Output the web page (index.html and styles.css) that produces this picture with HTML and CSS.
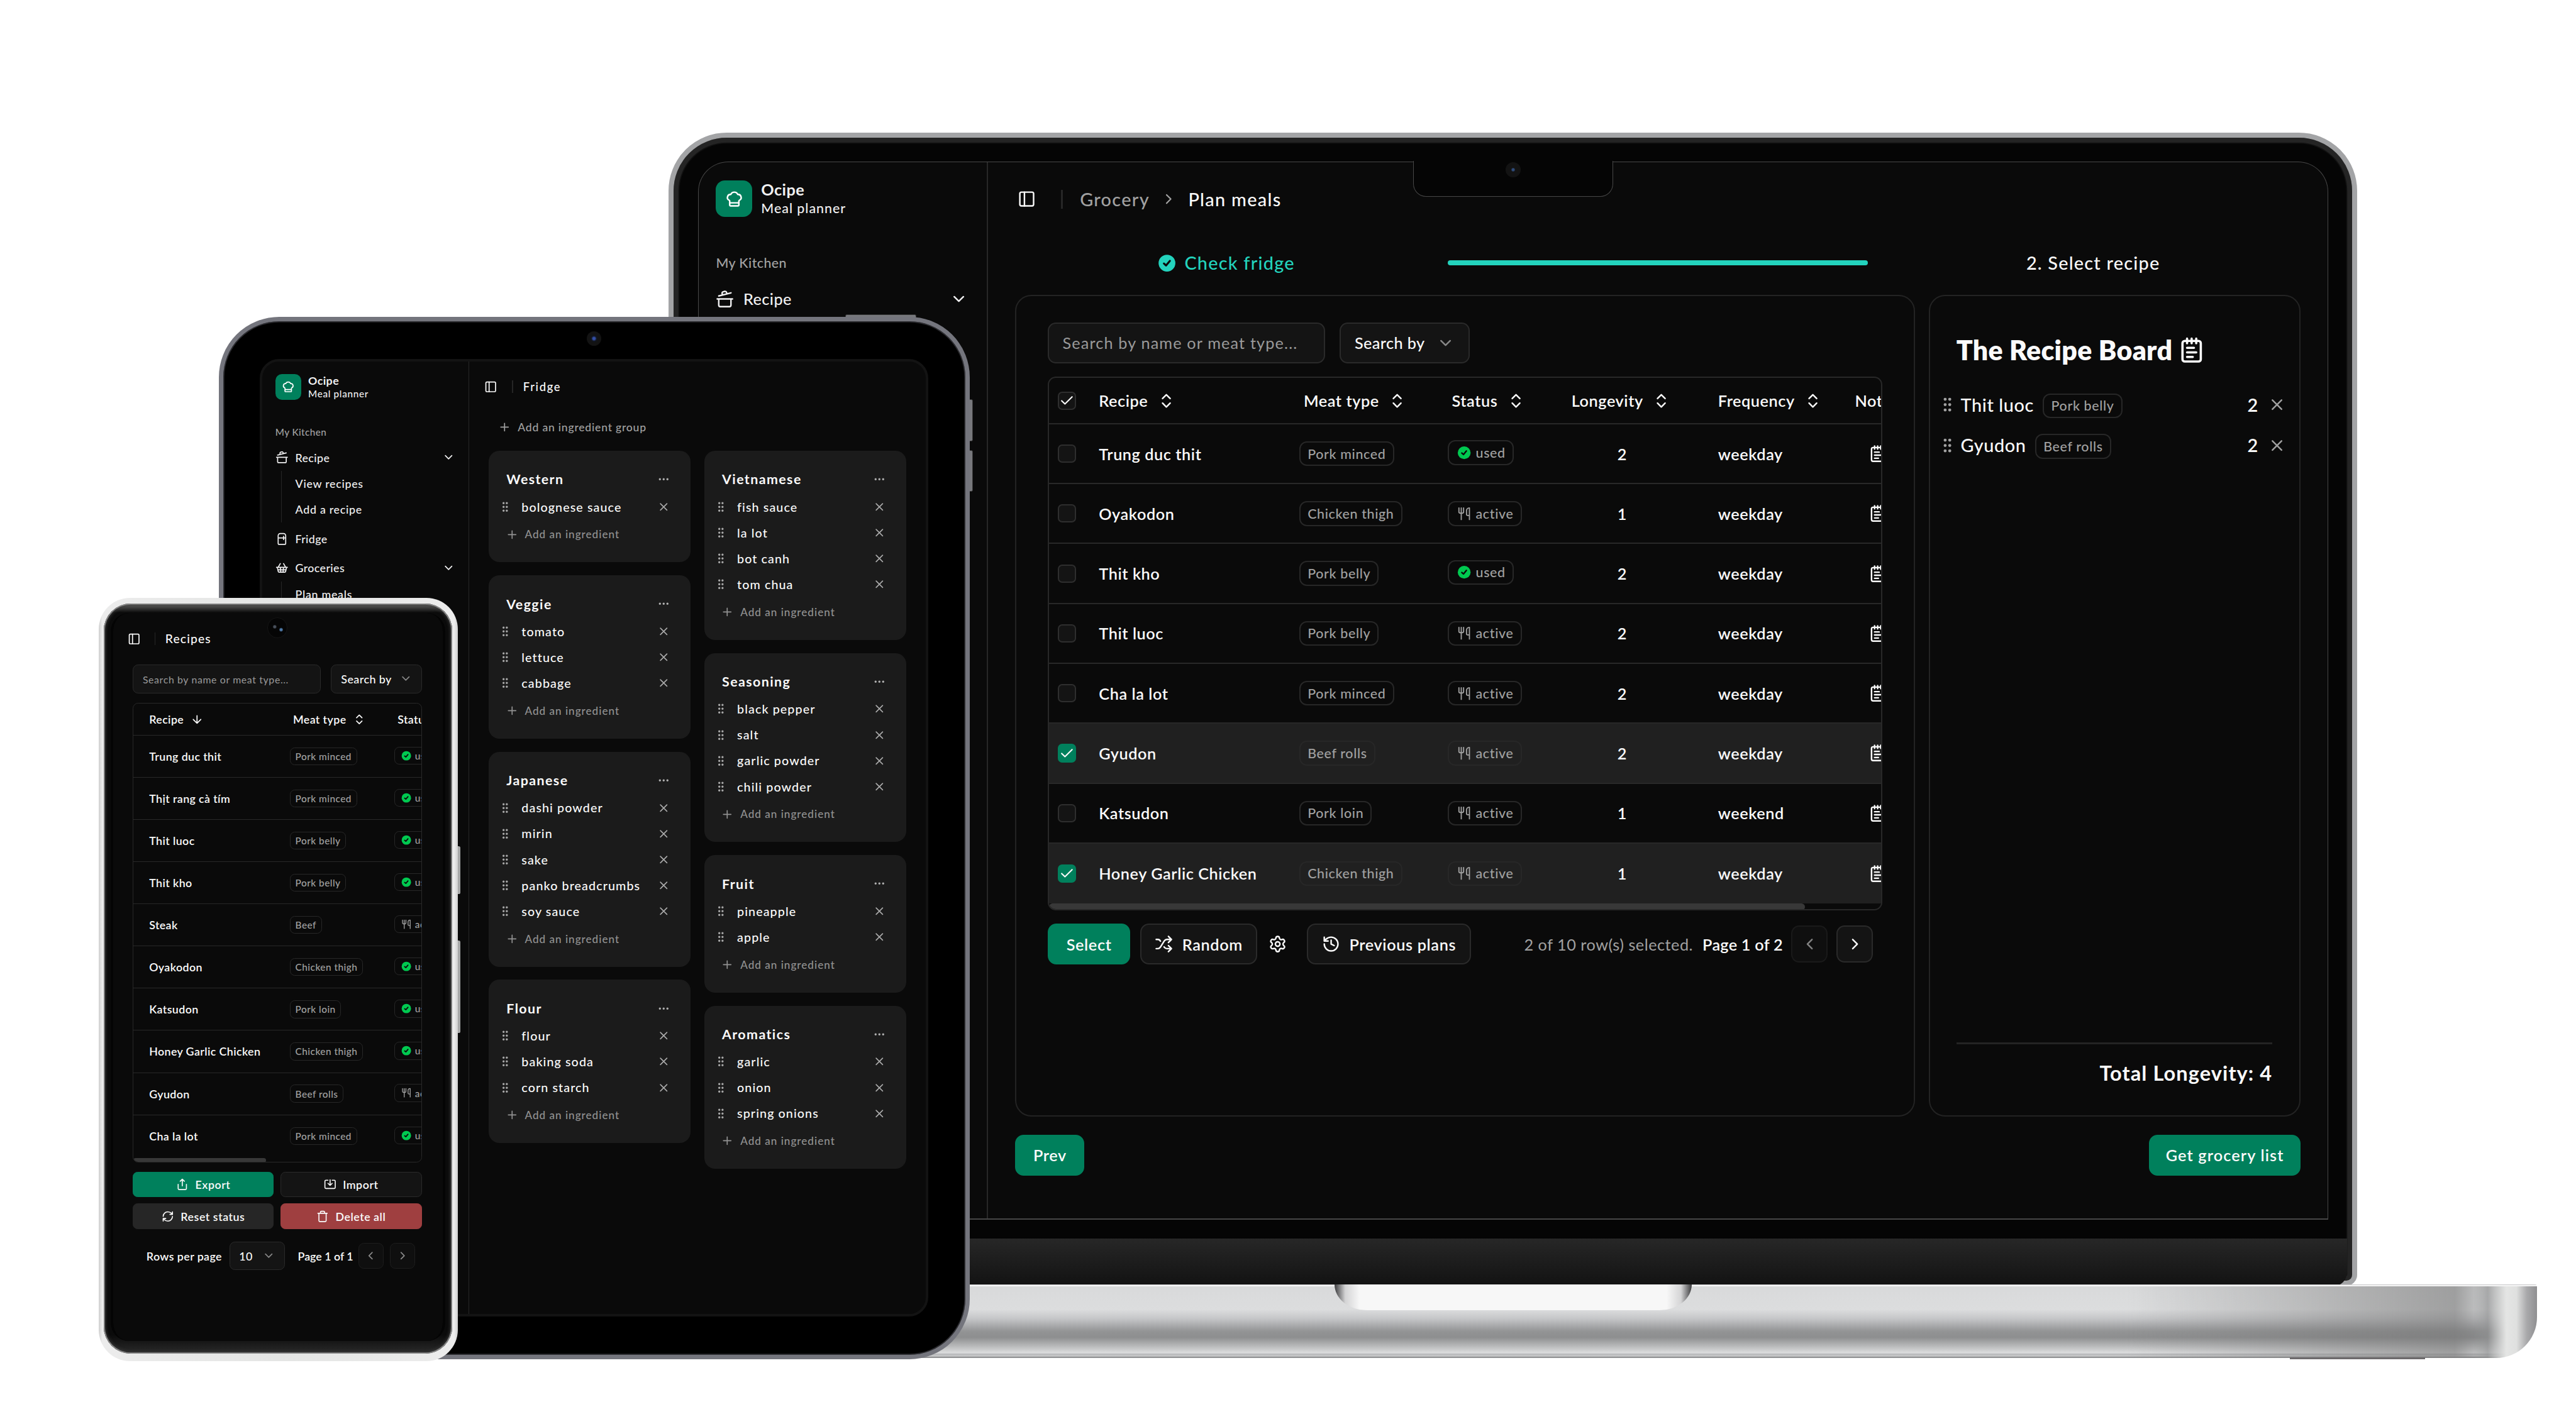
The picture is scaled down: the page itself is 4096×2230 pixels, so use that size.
FILE: index.html
```
<!DOCTYPE html>
<html lang="en">
<head>
<meta charset="utf-8">
<title>Ocipe – Meal planner</title>
<link rel="stylesheet" href="styles.css">
</head>
<body>
<svg class="sprite" aria-hidden="true">
<symbol id="hat" viewBox="0 0 24 24"><path d="M17 21a1 1 0 0 0 1-1v-5.35c0-.457.316-.844.727-1.041a4 4 0 0 0-2.134-7.589 5 5 0 0 0-9.186 0 4 4 0 0 0-2.134 7.588c.411.198.727.585.727 1.041V20a1 1 0 0 0 1 1ZM6 17h12"/></symbol>
<symbol id="pot" viewBox="0 0 24 24"><path d="M2 12h20M20 12v8a2 2 0 0 1-2 2H6a2 2 0 0 1-2-2v-8M4 8l16-4M8.86 6.78l-.45-1.81a2 2 0 0 1 1.45-2.43l1.94-.48a2 2 0 0 1 2.43 1.46l.45 1.8"/></symbol>
<symbol id="fridge" viewBox="0 0 24 24"><path d="M5 6a4 4 0 0 1 4-4h6a4 4 0 0 1 4 4v14a2 2 0 0 1-2 2H7a2 2 0 0 1-2-2ZM5 10h14M15 7v6"/></symbol>
<symbol id="basket" viewBox="0 0 24 24"><path d="m15 11-1 9M19 11l-4-7M2 11h20M3.500 11l1.600 7.400a2 2 0 0 0 2 1.600h9.800a2 2 0 0 0 2-1.600l1.700-7.400M4.500 15.500h15M5 11l4-7M9 11l1 9"/></symbol>
<symbol id="down" viewBox="0 0 24 24"><path d="m6 9 6 6 6-6"/></symbol>
<symbol id="right" viewBox="0 0 24 24"><path d="m9 18 6-6-6-6"/></symbol>
<symbol id="left" viewBox="0 0 24 24"><path d="m15 18-6-6 6-6"/></symbol>
<symbol id="sort" viewBox="0 0 24 24"><path d="m7 15 5 5 5-5M7 9l5-5 5 5"/></symbol>
<symbol id="arrow" viewBox="0 0 24 24"><path d="M12 5v14M19 12l-7 7-7-7"/></symbol>
<symbol id="panel" viewBox="0 0 24 24"><rect x="3" y="3" width="18" height="18" rx="2"/><path d="M9 3v18"/></symbol>
<symbol id="check" viewBox="0 0 24 24"><path d="M20 6 9 17l-5-5"/></symbol>
<symbol id="x" viewBox="0 0 24 24"><path d="M18 6 6 18M6 6l12 12"/></symbol>
<symbol id="plus" viewBox="0 0 24 24"><path d="M5 12h14M12 5v14"/></symbol>
<symbol id="dots" viewBox="0 0 24 24"><circle cx="5" cy="12" r="1"/><circle cx="12" cy="12" r="1"/><circle cx="19" cy="12" r="1"/></symbol>
<symbol id="grip" viewBox="0 0 24 24"><circle cx="9" cy="5" r="1"/><circle cx="9" cy="12" r="1"/><circle cx="9" cy="19" r="1"/><circle cx="15" cy="5" r="1"/><circle cx="15" cy="12" r="1"/><circle cx="15" cy="19" r="1"/></symbol>
<symbol id="note" viewBox="0 0 24 24"><path d="M8 2v4M12 2v4M16 2v4M8 10h6M8 14h8M8 18h5"/><rect x="4" y="4" width="16" height="18" rx="2"/></symbol>
<symbol id="fork" viewBox="0 0 24 24"><path d="M3 2v7c0 1.100.900 2 2 2h4a2 2 0 0 0 2-2V2M7 2v20M21 15V2a5 5 0 0 0-5 5v6c0 1.100.900 2 2 2h3Zm0 0v7"/></symbol>
<symbol id="done" viewBox="0 0 24 24"><circle class="disc" cx="12" cy="12" r="11"/><path class="tick" d="m8 12.500 2.800 2.500 5-6"/></symbol>
<symbol id="shuffle" viewBox="0 0 24 24"><path d="m18 14 4 4-4 4M18 2l4 4-4 4M2 18h1.973a4 4 0 0 0 3.300-1.700l5.454-8.600a4 4 0 0 1 3.300-1.700H22M2 6h1.972a4 4 0 0 1 3.600 2.200M22 18h-6.041a4 4 0 0 1-3.300-1.800l-.359-.450"/></symbol>
<symbol id="gear" viewBox="0 0 24 24"><path d="M9.671 4.136a2.340 2.340 0 0 1 4.659 0 2.340 2.340 0 0 0 3.319 1.915 2.340 2.340 0 0 1 2.330 4.033 2.340 2.340 0 0 0 0 3.831 2.340 2.340 0 0 1-2.330 4.033 2.340 2.340 0 0 0-3.319 1.915 2.340 2.340 0 0 1-4.659 0 2.340 2.340 0 0 0-3.320-1.915 2.340 2.340 0 0 1-2.330-4.033 2.340 2.340 0 0 0 0-3.831A2.340 2.340 0 0 1 6.350 6.051a2.340 2.340 0 0 0 3.319-1.915"/><circle cx="12" cy="12" r="3"/></symbol>
<symbol id="history" viewBox="0 0 24 24"><path d="M3 12a9 9 0 1 0 9-9 9.750 9.750 0 0 0-6.740 2.740L3 8M3 3v5h5M12 7v5l4 2"/></symbol>
<symbol id="share" viewBox="0 0 24 24"><path d="M12 2v13M16 6l-4-4-4 4M4 12v8a2 2 0 0 0 2 2h12a2 2 0 0 0 2-2v-8"/></symbol>
<symbol id="import" viewBox="0 0 24 24"><path d="M8 4H4a2 2 0 0 0-2 2v12a2 2 0 0 0 2 2h16a2 2 0 0 0 2-2V6a2 2 0 0 0-2-2h-4M12 3v11M8 10l4 4 4-4"/></symbol>
<symbol id="refresh" viewBox="0 0 24 24"><path d="M3 12a9 9 0 0 1 9-9 9.750 9.750 0 0 1 6.740 2.740L21 8M21 3v5h-5M21 12a9 9 0 0 1-9 9 9.750 9.750 0 0 1-6.740-2.740L3 16M8 16H3v5"/></symbol>
<symbol id="trash" viewBox="0 0 24 24"><path d="M3 6h18M19 6v14a2 2 0 0 1-2 2H7a2 2 0 0 1-2-2V6M8 6V4a2 2 0 0 1 2-2h4a2 2 0 0 1 2 2v2"/></symbol>
</svg>
<div class="stage">

<section class="laptop">
<div class="lid">
<div class="lid-chin"></div>
<div class="laptop-screen">
<aside class="side">
<div class="brand"><div class="logo"><svg><use href="#hat"/></svg></div><div class="brand-text"><b>Ocipe</b><span>Meal planner</span></div></div>
<div class="side-label">My Kitchen</div>
<div class="side-item"><svg><use href="#pot"/></svg><span>Recipe</span><svg class="end"><use href="#down"/></svg></div>
</aside>
<main class="main">
<header class="top"><svg><use href="#panel"/></svg><i class="sep"></i><span class="muted crumb1">Grocery</span><svg class="muted crumb-arrow"><use href="#right"/></svg><span>Plan meals</span></header>
<div class="steps"><div class="step teal"><svg class="done"><use href="#done"/></svg>Check fridge</div><i class="progress"></i><div class="step step2">2. Select recipe</div></div>
<div class="cards">
<section class="panel plan">
<div class="filters"><div class="input">Search by name or meat type...</div><div class="select">Search by<svg class="dim"><use href="#down"/></svg></div></div>
<div class="table">
<div class="tr th"><div class="cb"><svg><use href="#check"/></svg></div><div class="h">Recipe<svg><use href="#sort"/></svg></div><div class="h in">Meat type<svg><use href="#sort"/></svg></div><div class="h in">Status<svg><use href="#sort"/></svg></div><div class="h in">Longevity<svg><use href="#sort"/></svg></div><div class="h">Frequency<svg><use href="#sort"/></svg></div><div class="h">Notes</div></div>
<div class="tr"><div class="cb"></div><div>Trung duc thit</div><div><span class="tag">Pork minced</span></div><div><span class="tag st used"><svg class="done"><use href="#done"/></svg>used</span></div><div class="num">2</div><div>weekday</div><div class="nt"><svg><use href="#note"/></svg></div></div>
<div class="tr"><div class="cb"></div><div>Oyakodon</div><div><span class="tag">Chicken thigh</span></div><div><span class="tag st"><svg><use href="#fork"/></svg>active</span></div><div class="num">1</div><div>weekday</div><div class="nt"><svg><use href="#note"/></svg></div></div>
<div class="tr"><div class="cb"></div><div>Thit kho</div><div><span class="tag">Pork belly</span></div><div><span class="tag st used"><svg class="done"><use href="#done"/></svg>used</span></div><div class="num">2</div><div>weekday</div><div class="nt"><svg><use href="#note"/></svg></div></div>
<div class="tr"><div class="cb"></div><div>Thit luoc</div><div><span class="tag">Pork belly</span></div><div><span class="tag st"><svg><use href="#fork"/></svg>active</span></div><div class="num">2</div><div>weekday</div><div class="nt"><svg><use href="#note"/></svg></div></div>
<div class="tr"><div class="cb"></div><div>Cha la lot</div><div><span class="tag">Pork minced</span></div><div><span class="tag st"><svg><use href="#fork"/></svg>active</span></div><div class="num">2</div><div>weekday</div><div class="nt"><svg><use href="#note"/></svg></div></div>
<div class="tr on"><div class="cb"><svg><use href="#check"/></svg></div><div>Gyudon</div><div><span class="tag">Beef rolls</span></div><div><span class="tag st"><svg><use href="#fork"/></svg>active</span></div><div class="num">2</div><div>weekday</div><div class="nt"><svg><use href="#note"/></svg></div></div>
<div class="tr"><div class="cb"></div><div>Katsudon</div><div><span class="tag">Pork loin</span></div><div><span class="tag st"><svg><use href="#fork"/></svg>active</span></div><div class="num">1</div><div>weekend</div><div class="nt"><svg><use href="#note"/></svg></div></div>
<div class="tr on last"><div class="cb"><svg><use href="#check"/></svg></div><div>Honey Garlic Chicken</div><div><span class="tag">Chicken thigh</span></div><div><span class="tag st"><svg><use href="#fork"/></svg>active</span></div><div class="num">1</div><div>weekday</div><div class="nt"><svg><use href="#note"/></svg></div></div>
<div class="bar"></div>
</div>
<div class="tools"><div class="btn green b-select">Select</div><div class="btn b-random"><svg><use href="#shuffle"/></svg>Random</div><svg class="gear"><use href="#gear"/></svg><div class="btn b-prev"><svg><use href="#history"/></svg>Previous plans</div><div class="pager"><span class="muted count">2 of 10 row(s) selected.</span><span class="page">Page 1 of 2</span><div class="nav off"><svg><use href="#left"/></svg></div><div class="nav"><svg><use href="#right"/></svg></div></div></div>
</section>
<section class="panel board">
<h2>The Recipe Board<svg><use href="#note"/></svg></h2>
<div class="pick"><svg class="grip muted"><use href="#grip"/></svg><span>Thit luoc</span><span class="tag">Pork belly</span><span class="qty">2</span><svg class="muted"><use href="#x"/></svg></div>
<div class="pick"><svg class="grip muted"><use href="#grip"/></svg><span>Gyudon</span><span class="tag">Beef rolls</span><span class="qty">2</span><svg class="muted"><use href="#x"/></svg></div>
<div class="total">Total Longevity: 4</div>
</section>
</div>
<footer class="foot"><div class="btn green">Prev</div><div class="btn green b-list">Get grocery list</div></footer>
</main>
</div>
<div class="notch"><i></i></div>
</div>
<div class="base"><div class="thumb"></div></div>
<div class="foot-pad"></div>
</section>

<section class="tablet">
<i class="tkey tkey-top"></i><i class="tkey tkey-a"></i><i class="tkey tkey-b"></i>
<div class="tablet-body"><i class="tcam"></i>
<div class="tablet-screen">
<aside class="side">
<div class="brand"><div class="logo"><svg><use href="#hat"/></svg></div><div class="brand-text"><b>Ocipe</b><span>Meal planner</span></div></div>
<div class="side-label">My Kitchen</div>
<div class="side-item"><svg><use href="#pot"/></svg><span>Recipe</span><svg class="end"><use href="#down"/></svg></div>
<div class="sub"><div>View recipes</div><div>Add a recipe</div></div>
<div class="side-item"><svg><use href="#fridge"/></svg><span>Fridge</span></div>
<div class="side-item"><svg><use href="#basket"/></svg><span>Groceries</span><svg class="end"><use href="#down"/></svg></div>
<div class="sub"><div>Plan meals</div></div>
</aside>
<main class="main">
<header class="top"><svg><use href="#panel"/></svg><i class="sep"></i><span>Fridge</span></header>
<div class="add add-group"><svg><use href="#plus"/></svg>Add an ingredient group</div>
<div class="groups">
<div class="col">
<div class="group"><h3>Western<svg><use href="#dots"/></svg></h3>
<div class="ing"><svg class="grip"><use href="#grip"/></svg><span>bolognese sauce</span><svg><use href="#x"/></svg></div>
<div class="add"><svg><use href="#plus"/></svg>Add an ingredient</div></div>
<div class="group"><h3>Veggie<svg><use href="#dots"/></svg></h3>
<div class="ing"><svg class="grip"><use href="#grip"/></svg><span>tomato</span><svg><use href="#x"/></svg></div>
<div class="ing"><svg class="grip"><use href="#grip"/></svg><span>lettuce</span><svg><use href="#x"/></svg></div>
<div class="ing"><svg class="grip"><use href="#grip"/></svg><span>cabbage</span><svg><use href="#x"/></svg></div>
<div class="add"><svg><use href="#plus"/></svg>Add an ingredient</div></div>
<div class="group"><h3>Japanese<svg><use href="#dots"/></svg></h3>
<div class="ing"><svg class="grip"><use href="#grip"/></svg><span>dashi powder</span><svg><use href="#x"/></svg></div>
<div class="ing"><svg class="grip"><use href="#grip"/></svg><span>mirin</span><svg><use href="#x"/></svg></div>
<div class="ing"><svg class="grip"><use href="#grip"/></svg><span>sake</span><svg><use href="#x"/></svg></div>
<div class="ing"><svg class="grip"><use href="#grip"/></svg><span>panko breadcrumbs</span><svg><use href="#x"/></svg></div>
<div class="ing"><svg class="grip"><use href="#grip"/></svg><span>soy sauce</span><svg><use href="#x"/></svg></div>
<div class="add"><svg><use href="#plus"/></svg>Add an ingredient</div></div>
<div class="group"><h3>Flour<svg><use href="#dots"/></svg></h3>
<div class="ing"><svg class="grip"><use href="#grip"/></svg><span>flour</span><svg><use href="#x"/></svg></div>
<div class="ing"><svg class="grip"><use href="#grip"/></svg><span>baking soda</span><svg><use href="#x"/></svg></div>
<div class="ing"><svg class="grip"><use href="#grip"/></svg><span>corn starch</span><svg><use href="#x"/></svg></div>
<div class="add"><svg><use href="#plus"/></svg>Add an ingredient</div></div>
</div>
<div class="col">
<div class="group"><h3>Vietnamese<svg><use href="#dots"/></svg></h3>
<div class="ing"><svg class="grip"><use href="#grip"/></svg><span>fish sauce</span><svg><use href="#x"/></svg></div>
<div class="ing"><svg class="grip"><use href="#grip"/></svg><span>la lot</span><svg><use href="#x"/></svg></div>
<div class="ing"><svg class="grip"><use href="#grip"/></svg><span>bot canh</span><svg><use href="#x"/></svg></div>
<div class="ing"><svg class="grip"><use href="#grip"/></svg><span>tom chua</span><svg><use href="#x"/></svg></div>
<div class="add"><svg><use href="#plus"/></svg>Add an ingredient</div></div>
<div class="group"><h3>Seasoning<svg><use href="#dots"/></svg></h3>
<div class="ing"><svg class="grip"><use href="#grip"/></svg><span>black pepper</span><svg><use href="#x"/></svg></div>
<div class="ing"><svg class="grip"><use href="#grip"/></svg><span>salt</span><svg><use href="#x"/></svg></div>
<div class="ing"><svg class="grip"><use href="#grip"/></svg><span>garlic powder</span><svg><use href="#x"/></svg></div>
<div class="ing"><svg class="grip"><use href="#grip"/></svg><span>chili powder</span><svg><use href="#x"/></svg></div>
<div class="add"><svg><use href="#plus"/></svg>Add an ingredient</div></div>
<div class="group"><h3>Fruit<svg><use href="#dots"/></svg></h3>
<div class="ing"><svg class="grip"><use href="#grip"/></svg><span>pineapple</span><svg><use href="#x"/></svg></div>
<div class="ing"><svg class="grip"><use href="#grip"/></svg><span>apple</span><svg><use href="#x"/></svg></div>
<div class="add"><svg><use href="#plus"/></svg>Add an ingredient</div></div>
<div class="group"><h3>Aromatics<svg><use href="#dots"/></svg></h3>
<div class="ing"><svg class="grip"><use href="#grip"/></svg><span>garlic</span><svg><use href="#x"/></svg></div>
<div class="ing"><svg class="grip"><use href="#grip"/></svg><span>onion</span><svg><use href="#x"/></svg></div>
<div class="ing"><svg class="grip"><use href="#grip"/></svg><span>spring onions</span><svg><use href="#x"/></svg></div>
<div class="add"><svg><use href="#plus"/></svg>Add an ingredient</div></div>
</div>
</div>
</main>
</div>
</div>
</section>

<section class="phone">
<i class="pkey pkey-a"></i><i class="pkey pkey-b"></i>
<div class="phone-frame"><div class="phone-body">
<div class="phone-screen">
<i class="pcam"></i>
<header class="top"><svg><use href="#panel"/></svg><i class="sep"></i><span>Recipes</span></header>
<div class="filters"><div class="input">Search by name or meat type...</div><div class="select">Search by<svg class="dim"><use href="#down"/></svg></div></div>
<div class="table">
<div class="tr th"><div class="h">Recipe<svg><use href="#arrow"/></svg></div><div class="h in">Meat type<svg><use href="#sort"/></svg></div><div class="h in">Status</div></div>
<div class="tr"><div>Trung duc thit</div><div><span class="tag">Pork minced</span></div><div><span class="tag st used"><svg class="done"><use href="#done"/></svg>used</span></div></div>
<div class="tr"><div>Thịt rang cà tím</div><div><span class="tag">Pork minced</span></div><div><span class="tag st used"><svg class="done"><use href="#done"/></svg>used</span></div></div>
<div class="tr"><div>Thit luoc</div><div><span class="tag">Pork belly</span></div><div><span class="tag st used"><svg class="done"><use href="#done"/></svg>used</span></div></div>
<div class="tr"><div>Thit kho</div><div><span class="tag">Pork belly</span></div><div><span class="tag st used"><svg class="done"><use href="#done"/></svg>used</span></div></div>
<div class="tr"><div>Steak</div><div><span class="tag">Beef</span></div><div><span class="tag st"><svg><use href="#fork"/></svg>active</span></div></div>
<div class="tr"><div>Oyakodon</div><div><span class="tag">Chicken thigh</span></div><div><span class="tag st used"><svg class="done"><use href="#done"/></svg>used</span></div></div>
<div class="tr"><div>Katsudon</div><div><span class="tag">Pork loin</span></div><div><span class="tag st used"><svg class="done"><use href="#done"/></svg>used</span></div></div>
<div class="tr"><div>Honey Garlic Chicken</div><div><span class="tag">Chicken thigh</span></div><div><span class="tag st used"><svg class="done"><use href="#done"/></svg>used</span></div></div>
<div class="tr"><div>Gyudon</div><div><span class="tag">Beef rolls</span></div><div><span class="tag st"><svg><use href="#fork"/></svg>active</span></div></div>
<div class="tr last"><div>Cha la lot</div><div><span class="tag">Pork minced</span></div><div><span class="tag st used"><svg class="done"><use href="#done"/></svg>used</span></div></div>
<div class="bar"></div>
</div>
<div class="actions"><div class="btn green"><svg><use href="#share"/></svg>Export</div><div class="btn"><svg><use href="#import"/></svg>Import</div><div class="btn grey"><svg><use href="#refresh"/></svg>Reset status</div><div class="btn red"><svg><use href="#trash"/></svg>Delete all</div></div>
<div class="pages"><span class="rows">Rows per page</span><div class="select">10<svg class="dim"><use href="#down"/></svg></div><span class="page">Page 1 of 1</span><div class="nav"><svg><use href="#left"/></svg></div><div class="nav"><svg><use href="#right"/></svg></div></div>
</div>
</div></div>
</section>

</div>
</body>
</html>
```
FILE: styles.css
```
* { box-sizing: border-box; }
html, body { margin: 0; background: #fff; overflow: hidden; }
.sprite { position: absolute; width: 0; height: 0; }
.stage {
  position: relative; width: 4780px; height: 2602px; zoom: 0.8569;
  font-family: "Lato", "Noto Sans", sans-serif; font-weight: 500; color: #fafafa;
  letter-spacing: .03em; white-space: nowrap; overflow: hidden;
}
svg { flex: none; fill: none; stroke: currentColor; stroke-width: 2; stroke-linecap: round; stroke-linejoin: round; }
h2, h3 { margin: 0; }
.muted { color: #a1a1a1; }
.dim { opacity: .5; }
.disc { fill: currentColor; stroke: none; }
.tick { stroke: #0a0a0a; stroke-width: 2.600; }

/* shared app pieces */
.brand, .side-item, .top, .filters, .select, .input, .btn, .tag, .h, .nav { display: flex; align-items: center; }
.brand-text { display: flex; flex-direction: column; }
.brand-text b { font-weight: 700; }
.logo { display: flex; align-items: center; justify-content: center; background: #00805c; color: #fff; }
.side { color: #f0f0f1; border-right: 2px solid #272727; }
.side-label { display: flex; align-items: center; color: #a2a2a3; }
.end { margin-left: auto; }
.sep { background: #262626; }
.input, .select, .nav, .btn { border: 2px solid #2a2a2a; background: #141414; }
.input { color: #9a9a9a; font-weight: 400; }
.select { justify-content: space-between; }
.btn, .nav { justify-content: center; }
.btn { font-weight: 600; letter-spacing: .02em; }
.btn.green { background: #00805c; border-color: #00805c; }
.btn.grey { background: #262626; border-color: #262626; }
.btn.red { background: #9f3f40; border-color: #9f3f40; }
.table { border: 2px solid #282828; overflow: hidden; font-weight: 600; letter-spacing: .022em; }
.tr { display: grid; align-items: center; border-bottom: 2px solid #282828; }
.tr.last { border-bottom: 0; }
.tr.on { background: #202020; }
.tag { display: inline-flex; border: 2px solid #272727; color: #a1a1a1; font-weight: 500; letter-spacing: .03em; }
.tag .done { color: #00c950; }
.bar { background: #383838; }

/* laptop */
.lid {
  position: absolute; left: 1241px; top: 246px; width: 3133px; height: 2141px;
  border: 9.500px solid #a3a4a6; border-radius: 108px 108px 20px 20px; background: #050505;
  box-shadow: inset 0 0 0 9px #242424, inset 0 0 0 11px #111;
}
.lid-chin { position: absolute; left: 10px; right: 10px; top: 2044px; height: 88px; background: linear-gradient(#272727, #121212); border-radius: 0 0 26px 26px; }
.laptop-screen {
  position: absolute; left: 45.500px; top: 44.500px; width: 3024px; height: 1964px;
  display: grid; grid-template-columns: 536px 1fr; background: #0a0a0a;
  border: 1.200px solid #474747; border-bottom-width: 2.400px; border-radius: 56px 56px 0 0; overflow: hidden;
}
.notch {
  position: absolute; left: 1372px; top: 43.500px; width: 371px; height: 66px; background: #050505;
  border: 1.200px solid #474747; border-top: 0; border-radius: 0 0 24px 24px; display: flex; justify-content: center;
}
.notch i { width: 28px; height: 28px; margin-top: 2px; border-radius: 50%; background: radial-gradient(#2f4c7c 0 2px, #131313 4px); }
.base {
  position: absolute; left: 906px; top: 2384px; width: 3802px; height: 137px; border-radius: 4px 4px 76px 76px; overflow: hidden;
  background:
    linear-gradient(#c9c9cb 0 1px, #f6f6f6 1px 3px, transparent 3px),
    linear-gradient(90deg, transparent 0 96.900%, #8d8e8f99 97.600%, #e4e5e4 98.500%, #dfe0df 99%, #a9a9ab 99.500%, #8f8f91),
    linear-gradient(90deg, transparent 80%, #7779 96%, transparent 98%),
    linear-gradient(#d8d9da, #dcddde 34%, #c6c7c9 46%, #929394 64%, #8e8f90 72%, #b9babb 84%, #dcddde 93%, #b5b6b8 95%, #c9cacb 97%, #7d7e80);
}
.thumb {
  width: 663px; height: 48px; margin-left: 1570px; border-radius: 0 0 60px 60px / 0 0 48px 48px;
  background: linear-gradient(90deg, #3b3b3d, #d4d4d5 3%, #f7f7f7 7% 93%, #d4d4d5 97%, #3b3b3d);
}
.foot-pad { position: absolute; left: 4249px; top: 2520px; width: 251px; height: 3px; background: #6d6a6c; }

.laptop .side { padding: 34px 34px 0 31.500px; border-width: 3px; }
.laptop .brand { gap: 17px; height: 68px; }
.laptop .logo { width: 67px; height: 67px; border-radius: 17px; }
.laptop svg { width: 34px; height: 34px; }
.laptop .brand-text b { font-size: 29.500px; line-height: 37px; }
.laptop .brand-text span { font-size: 25px; line-height: 34px; letter-spacing: .045em; }
.laptop .side-label { height: 67px; margin-top: 51px; font-size: 25px; }
.laptop .side-item { height: 67px; gap: 17px; font-size: 29.500px; }
.laptop .main { padding: 0 50px 0 51px; display: flex; flex-direction: column; }
.laptop .top { height: 138px; font-size: 33.700px; padding-left: 4px; letter-spacing: .045em; }
.laptop .sep { width: 3px; height: 34px; margin: 0 32px 0 47px; }
.laptop .crumb1 { width: 149px; }
.laptop .crumb-arrow { width: 31px; margin-right: 21px; }
.laptop .steps { height: 98px; display: flex; align-items: center; font-size: 33.700px; padding-left: 264px; letter-spacing: .042em; }
.step { display: flex; align-items: center; gap: 16px; }
.laptop .step { width: 538px; }
.laptop .step2 { margin-left: 294px; width: auto; }
.teal { color: #23d3bd; }
.progress { width: 780px; height: 9px; border-radius: 5px; background: #23d3bd; }
.laptop .cards { display: grid; grid-template-columns: 1669px 690px; gap: 26px; height: 1526px; margin-top: 10px; }
.panel { border: 3px solid #232323; border-radius: 30px; }
.plan { padding: 49px 57px 0 58px; }
.laptop .filters { gap: 27px; font-size: 29.500px; }
.laptop .input { width: 515px; height: 76px; border-radius: 15px; padding-left: 25px; border-width: 3px; letter-spacing: .045em; }
.laptop .select { width: 241px; height: 76px; border-radius: 15px; padding: 0 25px; border-width: 3px; }
.laptop .table { margin-top: 25px; height: 990px; border-radius: 15px; border-width: 3px; font-size: 29.500px; width: 1549px; }
.laptop .tr { height: 111.200px; border-bottom-width: 3px; grid-template-columns: 92.500px 372px 275px 222px 280px 254px 200px; }
.laptop .th { height: 86px; }
.laptop .h { gap: 17px; }
.laptop .h.in { padding-left: 8px; }
.cb { width: 34px; height: 34px; margin-left: 16.500px; border: 3px solid #2e2e2e; border-radius: 8px; background: #141414; display: flex; align-items: center; justify-content: center; }
.laptop .cb svg { width: 29px; height: 29px; }
.on .cb { background: #00805c; border-color: #00805c; }
.num { width: 204px; text-align: center; }
.nt { padding-left: 25px; height: 34px; }
.laptop .tag { height: 46px; padding: 0 13px; font-size: 25px; border-radius: 14px; border-width: 3px; }
.laptop .tag svg { width: 26px; height: 26px; }
.laptop .st { padding: 0 13px 0 16px; gap: 8px; }
.laptop .tag.used { margin-top: -5px; }
.laptop .tr .tag { vertical-align: middle; }
.laptop .last { height: 111px; }
.laptop .bar { width: 1403px; height: 13px; border-radius: 7px; }
.laptop .tools { display: flex; align-items: center; margin-top: 25px; font-size: 29.500px; }
.laptop .btn { height: 76px; border-radius: 16px; border-width: 3px; padding: 0 31px; gap: 17px; font-size: 29.500px; letter-spacing: .025em; }
.laptop .b-select { width: 153px; padding: 0; }
.laptop .b-random { width: 218px; padding: 0; margin-left: 18px; }
.laptop .gear { margin: 0 38px 0 20px; }
.laptop .b-prev { width: 304px; padding: 0; }
.laptop .b-list { width: 281px; padding: 0; letter-spacing: .045em; }
.pager { display: flex; align-items: center; }
.count { width: 331px; margin-left: 99px; font-weight: 400; letter-spacing: .02em; }
.laptop .page { width: 165px; font-weight: 600; letter-spacing: .01em; }
.laptop .nav { width: 67px; height: 68px; border-radius: 15px; border-width: 3px; }
.off { opacity: .5; }
.laptop .nav + .nav { margin-left: 17px; }
.board { padding: 0 32px 0 15px; display: flex; flex-direction: column; }
.board h2 { display: flex; align-items: center; height: 76px; margin: 62px 0 26px 34px; font-size: 50px; font-weight: 800; letter-spacing: .007em; }
.laptop .board h2 svg { width: 51px; height: 51px; margin-left: 10px; }
.pick { display: flex; align-items: center; height: 75.500px; font-size: 33.700px; font-weight: 500; letter-spacing: .02em; }
.pick .grip { margin-right: 8px; }
.laptop .pick .tag { margin-left: 17px; margin-top: 4px; font-weight: 500; }
.pick .qty { margin-left: auto; font-weight: 600; }
.laptop .pick > svg:last-child { margin: 0 -7px 0 17px; }
.total { margin: auto 18px 0 34px; height: 138px; border-top: 4px solid #242424; padding-top: 31px; text-align: right; font-size: 38px; font-weight: 700; line-height: 46px; margin-bottom: -2px; letter-spacing: .033em; }
.laptop .foot { display: flex; justify-content: space-between; margin-top: 33px; }

/* tablet */
.tablet-body {
  position: absolute; left: 406px; top: 588px; width: 1394px; height: 1935px; background: #000;
  border: 8.200px solid #74757d; border-radius: 112px; box-shadow: inset 0 0 0 2px #2c2c30;
}
.tkey { position: absolute; background: #77787c; border: 1px solid #333; }
.tkey-top { left: 1568px; top: 584px; width: 132px; height: 10px; border-radius: 3px; }
.tkey-a { left: 1796px; top: 741px; width: 9px; height: 78px; border-radius: 3px; }
.tkey-b { left: 1796px; top: 835px; width: 9px; height: 78px; border-radius: 3px; }
.tcam { position: absolute; left: 675px; top: 19px; width: 27px; height: 27px; border-radius: 50%; background: radial-gradient(#3450a8 0 2px, #10141c 5px, #131313 8px); }
.tablet-screen {
  position: absolute; left: 68px; top: 70px; width: 1240px; height: 1778px; border: 4.700px solid #131313; border-radius: 36px;
  background: #0a0a0a; overflow: hidden; display: grid; grid-template-columns: 384px 1fr;
}
.tablet svg { width: 24px; height: 24px; }
.tablet .side { padding: 22.500px 25px 0 24px; }
.tablet .brand { gap: 13px; height: 50px; }
.tablet .logo { width: 48px; height: 48px; border-radius: 12px; }
.tablet .brand-text b { font-size: 20.800px; line-height: 26px; }
.tablet .brand-text span { font-size: 17.800px; line-height: 24px; letter-spacing: .045em; }
.tablet .side-label { margin-top: 34px; height: 48px; font-size: 17.800px; }
.tablet .side-item { height: 48px; gap: 13px; font-size: 20.800px; }
.tablet .sub { margin: 1px 0 6px 11px; padding-left: 25px; border-left: 2px solid #262626; font-size: 20.800px; letter-spacing: .04em; }
.tablet .sub div { height: 48px; line-height: 48px; }
.tablet .side-item + .side-item { margin-top: 6px; }
.tablet .main { padding-left: 36px; }
.tablet .top { height: 94px; font-size: 21.500px; margin-left: -8px; letter-spacing: .09em; }
.tablet .sep { width: 2px; height: 24px; margin: 0 19px 0 27px; }
.add { display: flex; align-items: center; color: #929292; }
.tablet .add { height: 48px; gap: 12px; font-size: 20px; letter-spacing: .058em; }
.tablet .add-group { margin: 4px 0 20px 18px; color: #a1a1a1; font-size: 20.500px; letter-spacing: .045em; }
.groups { display: flex; gap: 25px; }
.col { width: 375px; display: flex; flex-direction: column; gap: 24.400px; }
.group { background: #1b1b1b; border-radius: 20px; padding: 29px 26px 28px 25px; }
.group h3 { height: 48px; margin-bottom: 3px; padding: 0 12px 0 8px; display: flex; align-items: center; justify-content: space-between; font-size: 25px; font-weight: 700; letter-spacing: .065em; }
.group h3 svg { color: #b0b0b0; }
.ing { height: 48px; display: flex; align-items: center; font-size: 23px; letter-spacing: .055em; color: #fafafa; }
.ing .grip { margin-left: -6px; margin-right: 18px; }
.tablet .ing svg { color: #a9a9a9; }
.ing svg:last-child { margin-left: auto; margin-right: 12px; }
.group .add { margin-top: 3px; padding-left: 6px; }

/* phone */
.phone-frame { position: absolute; left: 183px; top: 1110px; width: 666px; height: 1416px; border-radius: 58px; background: linear-gradient(90deg, #cfcfcf, #ececec 1%, #e4e5e4 50%, #ececec 99%, #cfcfcf); padding: 10px 10px 13px 10px; }
.phone-body { height: 100%; border-radius: 50px; background: linear-gradient(#6b6b69, #0b0b0b 1.200% 97.500%, #2b2b2b); padding: 18px 11px 24px 12px; box-shadow: inset 0 0 0 2px #868686, inset 0 0 6px 3px #3a3a3a; }
.phone-screen { position: relative; width: 621px; height: 1351px; border-radius: 34px; background: #0a0a0a; overflow: hidden; padding: 0 36px 0 37px; border-left: 5px solid #040404; border-right: 5px solid #040404; }
.pkey { position: absolute; left: 846px; width: 8px; border-radius: 3px; background: #a7a8a8; }
.pkey-a { top: 1571px; height: 89px; }
.pkey-b { top: 1746px; height: 171px; }
.pcam { position: absolute; left: 286px; top: 8px; width: 38px; height: 38px; border-radius: 50%; background: radial-gradient(circle at 36% 45%, #48505c 0 2px, transparent 4px), radial-gradient(circle at 70% 60%, #4f7aa8 0 2px, transparent 4px), #050505; border: 1.200px solid #151515; }
.phone svg { width: 24px; height: 24px; }
.phone .top { height: 95px; margin-left: -10px; font-size: 22.500px; letter-spacing: .06em; }
.phone .sep { width: 2px; height: 24px; margin: 0 18px 0 26px; }
.phone .filters { gap: 18px; font-size: 21px; }
.phone .input { width: 349px; height: 54px; border-radius: 10px; padding: 3px 0 0 17px; font-size: 18.500px; letter-spacing: .04em; }
.phone .select { width: 169px; height: 54px; border-radius: 10px; padding: 0 16px 0 18px; font-weight: 500; }
.phone .table { margin-top: 18px; height: 853px; border-radius: 10px; font-size: 20.800px; width: 536px; }
.phone .tr { height: 78.300px; padding-left: 29px; grid-template-columns: 261px 194px 200px; }
.phone .th { height: 59px; }
.phone .h { gap: 12px; }
.phone .h.in { padding-left: 6px; }
.phone .tag { height: 33px; border-radius: 9px; padding: 0 9px; font-size: 18px; vertical-align: middle; letter-spacing: .03em; }
.phone .tag svg { width: 19px; height: 19px; }
.phone .st { padding-left: 12px; gap: 6px; margin-top: -3px; }
.phone .bar { width: 246px; height: 9px; border-radius: 5px; margin-top: 1px; }
.phone .actions { display: grid; grid-template-columns: 261.500px 262px; gap: 11.600px 12.500px; margin-top: 17px; }
.phone .btn { height: 47.600px; border-radius: 9px; gap: 12px; font-size: 20.800px; letter-spacing: .03em; }
.phone .btn svg { width: 23px; height: 23px; }
.phone .pages { display: flex; align-items: center; margin-top: 23px; padding-left: 25px; font-size: 20.800px; font-weight: 600; }
.phone .rows { width: 154px; }
.phone .pages .select { width: 103px; height: 53px; padding: 0 17px; }
.phone .page { width: 112px; margin-left: 24px; letter-spacing: 0; }
.phone .nav { width: 47px; height: 48px; border-radius: 10px; margin-right: 12px; border-color: #1d1d1d; background: #0f0f0f; }
.phone .nav svg { color: #8a8a8a; }
```
